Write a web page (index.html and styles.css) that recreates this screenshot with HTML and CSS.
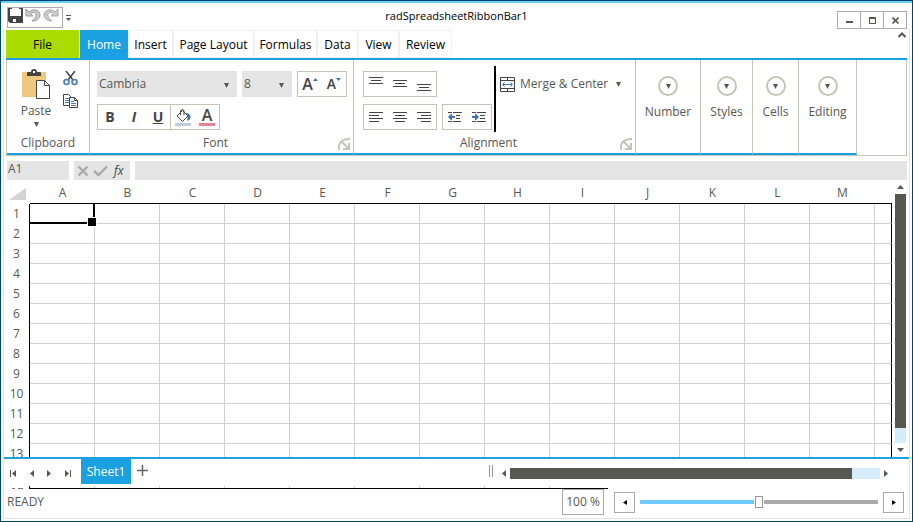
FILE: index.html
```html
<!DOCTYPE html>
<html lang="en">
<head>
<meta charset="utf-8">
<title>radSpreadsheetRibbonBar1</title>
<link rel="stylesheet" href="styles.css">
</head>
<body>
<div class="window">
  <header class="titlebar">
    <div class="quick">
      <div class="quick-box">
        <button aria-label="Save"><svg width="15" height="15" viewBox="0 0 15 15"><path d="M0 0h15v15H2l-2-2z" fill="#444"/><path d="M2 1h11v7H2z" fill="#fff"/><path d="M4 0h7v1H4zM5 11h5v3H5z" fill="#fff"/><path d="M8 11h2v3H8z" fill="#444"/></svg></button>
        <button aria-label="Undo"><svg width="16" height="15" viewBox="0 0 16 15"><path d="M1 1v7h7L5.500 5.500C9 3 12 5 11 8c-.5 2-2 3-4 5 4 0 8-2 8-6 0-5-7-7-11-3z" fill="#ccc" stroke="#999"/></svg></button>
        <button aria-label="Redo"><svg width="16" height="15" viewBox="0 0 16 15"><path d="M15 1v7H8l2.500-2.500C7 3 4 5 5 8c.5 2 2 3 4 5-4 0-8-2-8-6 0-5 7-7 11-3z" fill="#ccc" stroke="#aaa"/></svg></button>
      </div>
      <button class="quick-more" aria-label="Customize toolbar"><svg width="5" height="7" viewBox="0 0 5 7"><path d="M0 0h5v1H0zM0 3h5L2.500 6z" fill="#555"/></svg></button>
    </div>
    <h1>radSpreadsheetRibbonBar1</h1>
    <div class="window-buttons">
      <button aria-label="Minimize"><svg width="7" height="8" viewBox="0 0 7 8"><path d="M0 5h7v2H0z" fill="#585852"/></svg></button>
      <button aria-label="Maximize"><svg width="7" height="7" viewBox="0 0 7 7"><path d="M0 0h7v7H0zM1 2v4h5V2z" fill="#585852" fill-rule="evenodd"/></svg></button>
      <button aria-label="Close"><svg width="7" height="7" viewBox="0 0 7 7"><path d="M.5.500l6 6M6.500.500l-6 6" stroke="#585852" stroke-width="1.600"/></svg></button>
    </div>
  </header>

  <div class="frame">
    <nav class="tabs">
      <button class="tab file">File</button>
      <button class="tab home">Home</button>
      <button class="tab insert">Insert</button>
      <button class="tab page">Page Layout</button>
      <button class="tab formulas">Formulas</button>
      <button class="tab data">Data</button>
      <button class="tab view">View</button>
      <button class="tab review">Review</button>
      <button class="collapse" aria-label="Collapse ribbon"><svg width="8" height="6" viewBox="0 0 8 6"><path d="M.5 5L4 1.500 7.500 5" fill="none" stroke="#585852" stroke-width="2"/></svg></button>
    </nav>

    <div class="ribbon">
      <section class="group clipboard">
        <div class="content">
          <button class="paste">
            <svg width="29" height="31" viewBox="0 0 29 31"><path d="M0 3h24v25H0z" fill="#edc87e"/><path d="M5 7V4q0-1 1-1h3q0-3 3-3t3 3h3q1 0 1 1v3z" fill="#444"/><path d="M11 2h2v2h-2z" fill="#fff"/><path d="M14.500 11.500h8l5 5v13h-13z" fill="#fff" stroke="#444"/><path d="M22.500 11.500v5h5" fill="none" stroke="#444"/></svg>
            <span>Paste</span>
            <svg class="caret" width="5" height="5" viewBox="0 0 5 5"><path d="M0 0h5L2.500 5z"/></svg>
          </button>
          <div class="clip-tools">
            <button aria-label="Cut"><svg width="15" height="15" viewBox="0 0 15 15"><path d="M3 0l7 9M12 0L5 9" stroke="#444" stroke-width="1.500"/><circle cx="3.500" cy="11" r="2.500" fill="none" stroke="#4a7ab0" stroke-width="1.600"/><circle cx="11.500" cy="11" r="2.500" fill="none" stroke="#4a7ab0" stroke-width="1.600"/></svg></button>
            <button aria-label="Copy"><svg width="15" height="15" viewBox="0 0 15 15"><path d="M.5.500h5l3 3v8h-8z" fill="#fff" stroke="#444"/><path d="M2 4.500h4M2 6.500h4M2 8.500h4" stroke="#4a7ab0"/><path d="M6.500 3.500h5l3 3v7h-8z" fill="#fff" stroke="#444"/><path d="M11.500 3.500v3h3" fill="none" stroke="#444"/><path d="M8 7.500h3M8 9.500h5M8 11.500h5" stroke="#4a7ab0"/></svg></button>
          </div>
        </div>
        <h2>Clipboard</h2>
      </section>

      <section class="group font">
        <div class="content rows">
          <div class="row">
            <label class="combo family"><select aria-label="Font family"><option>Cambria</option></select><svg class="caret" width="5" height="5" viewBox="0 0 5 5"><path d="M0 0h5L2.500 5z"/></svg></label>
            <label class="combo size"><select aria-label="Font size"><option>8</option></select><svg class="caret" width="5" height="5" viewBox="0 0 5 5"><path d="M0 0h5L2.500 5z"/></svg></label>
            <div class="set">
              <button class="grow" aria-label="Increase font size">A<svg width="5" height="3" viewBox="0 0 5 3"><path d="M0 3h5L2.500 0z" fill="#3f75b5"/></svg></button>
              <button class="grow small" aria-label="Decrease font size">A<svg width="5" height="3" viewBox="0 0 5 3"><path d="M0 0h5L2.500 3z" fill="#3f75b5"/></svg></button>
            </div>
          </div>
          <div class="row tight">
            <div class="set"><button class="style">B</button><button class="style italic">I</button><button class="style under">U</button></div>
            <div class="set">
              <button aria-label="Fill color"><svg width="16" height="17" viewBox="0 0 16 17"><path d="M7.500 1.500l5.500 5.500-5.500 5.500L2 7z" fill="#fff" stroke="#444"/><path d="M5.500 6V1.500q2-2 3.500 0V6" fill="none" stroke="#444"/><path d="M10 4q6 0 5.500 4.500Q14 13 12 11l1-4z" fill="#3f75b5"/><path d="M0 14h16v3H0z" fill="#bfcde4"/></svg></button>
              <button class="text-color" aria-label="Font color">A</button>
            </div>
          </div>
        </div>
        <h2>Font</h2>
        <button class="launcher" aria-label="Font settings"><svg width="13" height="13" viewBox="0 0 13 13"><path d="M1 12Q-.5 1 12 1M4 4l6 6M11 5v6H5" fill="none" stroke="#c5c5b5" stroke-width="2"/></svg></button>
      </section>

      <section class="group alignment">
        <div class="content">
          <div class="rows">
            <div class="row"><div class="set">
              <button aria-label="Top align"><svg width="14" height="14" viewBox="0 0 14 14"><path d="M0 .5h14M2 3.500h10M0 6.500h14"/></svg></button>
              <button aria-label="Middle align"><svg width="14" height="14" viewBox="0 0 14 14"><path d="M0 3.500h14M2 6.500h10M0 9.500h14"/></svg></button>
              <button aria-label="Bottom align"><svg width="14" height="14" viewBox="0 0 14 14"><path d="M0 7.500h14M2 10.500h10M0 13.500h14"/></svg></button>
            </div></div>
            <div class="row">
              <div class="set">
                <button aria-label="Align left"><svg width="14" height="10" viewBox="0 0 14 10"><path d="M0 .5h14M0 3.500h10M0 6.500h14M0 9.500h10"/></svg></button>
                <button aria-label="Center"><svg width="14" height="10" viewBox="0 0 14 10"><path d="M0 .5h14M2 3.500h10M0 6.500h14M2 9.500h10"/></svg></button>
                <button aria-label="Align right"><svg width="14" height="10" viewBox="0 0 14 10"><path d="M0 .5h14M4 3.500h10M0 6.500h14M4 9.500h10"/></svg></button>
              </div>
              <div class="set">
                <button aria-label="Decrease indent"><svg width="14" height="10" viewBox="0 0 14 10"><path d="M0 .5h4M5 .5h9M8 3.500h4M8 6.500h4M0 9.500h4M5 9.500h8"/><path d="M0 5l3-3h1v2h3v2H4v2H3z" class="blue"/></svg></button>
                <button aria-label="Increase indent"><svg width="14" height="10" viewBox="0 0 14 10"><path d="M0 .5h4M5 .5h9M8 3.500h5M8 6.500h5M0 9.500h4M5 9.500h9"/><path d="M7 5L4 2H3v2H0v2h3v2h1z" class="blue"/></svg></button>
              </div>
            </div>
          </div>
          <div class="divider"></div>
          <button class="merge">
            <svg width="15" height="15" viewBox="0 0 15 15"><path d="M.5.500h14v14H.5zM.5 3.500h14M.5 11.500h14M7.500 0v3M7.500 12v3" fill="none" stroke="#444"/><path d="M3 7.500h9M4.500 5.500l-2 2 2 2M10.500 5.500l2 2-2 2" fill="none" stroke="#3f75b5"/></svg>
            <span>Merge &amp; Center</span>
            <svg class="caret" width="5" height="5" viewBox="0 0 5 5"><path d="M0 0h5L2.500 5z"/></svg>
          </button>
        </div>
        <h2>Alignment</h2>
        <button class="launcher" aria-label="Alignment settings"><svg width="13" height="13" viewBox="0 0 13 13"><path d="M1 12Q-.5 1 12 1M4 4l6 6M11 5v6H5" fill="none" stroke="#c5c5b5" stroke-width="2"/></svg></button>
      </section>

      <button class="group folded number"><span class="disc"><svg class="caret" width="5" height="5" viewBox="0 0 5 5"><path d="M0 0h5L2.500 5z"/></svg></span>Number</button>
      <button class="group folded styles"><span class="disc"><svg class="caret" width="5" height="5" viewBox="0 0 5 5"><path d="M0 0h5L2.500 5z"/></svg></span>Styles</button>
      <button class="group folded cells"><span class="disc"><svg class="caret" width="5" height="5" viewBox="0 0 5 5"><path d="M0 0h5L2.500 5z"/></svg></span>Cells</button>
      <button class="group folded editing"><span class="disc"><svg class="caret" width="5" height="5" viewBox="0 0 5 5"><path d="M0 0h5L2.500 5z"/></svg></span>Editing</button>
    </div>

    <div class="formula-bar">
      <input class="name-box" aria-label="Name box" value="A1">
      <div class="formula-tools">
        <button aria-label="Cancel"><svg width="12" height="12" viewBox="0 0 12 12"><path d="M1.500 1.500l9 9M10.500 1.500l-9 9" stroke="#aaa" stroke-width="2.400"/></svg></button>
        <button aria-label="Enter"><svg width="15" height="12" viewBox="0 0 15 12"><path d="M1 6l4.500 4L14 1.500" fill="none" stroke="#aaa" stroke-width="2.400"/></svg></button>
        <button class="fx">fx</button>
      </div>
      <input class="formula" aria-label="Formula">
    </div>

    <main class="sheet-area">
      <div class="sheet">
        <table>
          <colgroup><col class="row-col"><col span="13" class="data-col"><col></colgroup>
          <thead><tr><th class="corner"><svg width="17" height="12" viewBox="0 0 17 12"><path d="M17 0v12H0z" fill="#d3d3d3"/></svg></th><th>A</th><th>B</th><th>C</th><th>D</th><th>E</th><th>F</th><th>G</th><th>H</th><th>I</th><th>J</th><th>K</th><th>L</th><th>M</th><th></th></tr></thead>
          <tbody>
            <tr><th>1</th><td class="selected"></td><td></td><td></td><td></td><td></td><td></td><td></td><td></td><td></td><td></td><td></td><td></td><td></td><td></td></tr>
            <tr><th>2</th><td></td><td></td><td></td><td></td><td></td><td></td><td></td><td></td><td></td><td></td><td></td><td></td><td></td><td></td></tr>
            <tr><th>3</th><td></td><td></td><td></td><td></td><td></td><td></td><td></td><td></td><td></td><td></td><td></td><td></td><td></td><td></td></tr>
            <tr><th>4</th><td></td><td></td><td></td><td></td><td></td><td></td><td></td><td></td><td></td><td></td><td></td><td></td><td></td><td></td></tr>
            <tr><th>5</th><td></td><td></td><td></td><td></td><td></td><td></td><td></td><td></td><td></td><td></td><td></td><td></td><td></td><td></td></tr>
            <tr><th>6</th><td></td><td></td><td></td><td></td><td></td><td></td><td></td><td></td><td></td><td></td><td></td><td></td><td></td><td></td></tr>
            <tr><th>7</th><td></td><td></td><td></td><td></td><td></td><td></td><td></td><td></td><td></td><td></td><td></td><td></td><td></td><td></td></tr>
            <tr><th>8</th><td></td><td></td><td></td><td></td><td></td><td></td><td></td><td></td><td></td><td></td><td></td><td></td><td></td><td></td></tr>
            <tr><th>9</th><td></td><td></td><td></td><td></td><td></td><td></td><td></td><td></td><td></td><td></td><td></td><td></td><td></td><td></td></tr>
            <tr><th>10</th><td></td><td></td><td></td><td></td><td></td><td></td><td></td><td></td><td></td><td></td><td></td><td></td><td></td><td></td></tr>
            <tr><th>11</th><td></td><td></td><td></td><td></td><td></td><td></td><td></td><td></td><td></td><td></td><td></td><td></td><td></td><td></td></tr>
            <tr><th>12</th><td></td><td></td><td></td><td></td><td></td><td></td><td></td><td></td><td></td><td></td><td></td><td></td><td></td><td></td></tr>
            <tr><th>13</th><td></td><td></td><td></td><td></td><td></td><td></td><td></td><td></td><td></td><td></td><td></td><td></td><td></td><td></td></tr>
          </tbody>
        </table>
      </div>
      <div class="v-scroll">
        <button aria-label="Scroll up"><svg width="7" height="4" viewBox="0 0 7 4"><path d="M0 4h7L3.500 0z"/></svg></button>
        <div class="track"><div class="thumb"></div></div>
        <button aria-label="Scroll down"><svg width="7" height="4" viewBox="0 0 7 4"><path d="M0 0h7L3.500 4z"/></svg></button>
      </div>
    </main>

    <div class="sheet-tabs">
      <div class="sheet-nav">
        <button aria-label="First sheet"><svg width="7" height="7" viewBox="0 0 7 7"><path d="M0 0h1v7H0zM6 0v7L2 3.500z"/></svg></button>
        <button aria-label="Previous sheet"><svg width="4" height="7" viewBox="0 0 4 7"><path d="M4 0v7L0 3.500z"/></svg></button>
        <button aria-label="Next sheet"><svg width="4" height="7" viewBox="0 0 4 7"><path d="M0 0v7l4-3.500z"/></svg></button>
        <button aria-label="Last sheet"><svg width="7" height="7" viewBox="0 0 7 7"><path d="M6 0h1v7H6zM1 0v7l4-3.500z"/></svg></button>
      </div>
      <button class="sheet-tab">Sheet1</button>
      <button class="add-sheet" aria-label="Add sheet"><svg width="11" height="11" viewBox="0 0 11 11"><path d="M5 0h1v5h5v1H6v5H5V6H0V5h5z" fill="#666" stroke="#666" stroke-width=".5"/></svg></button>
      <div class="h-scroll">
        <span class="splitter"></span>
        <button aria-label="Scroll left"><svg width="4" height="7" viewBox="0 0 4 7"><path d="M4 0v7L0 3.500z"/></svg></button>
        <div class="track"><div class="thumb"></div></div>
        <button aria-label="Scroll right"><svg width="4" height="7" viewBox="0 0 4 7"><path d="M0 0v7l4-3.500z"/></svg></button>
      </div>
    </div>
    <div class="sheet-edge"><svg class="edge-header" width="25" height="3" viewBox="0 0 25 3"><path d="M8 2h3v1H8zM14 2h5v1h-5z" fill="#777"/></svg><span class="edge-cells"></span></div>

    <footer class="status">
      <span>READY</span>
      <div class="zoom">
        <button class="percent">100 %</button>
        <button class="step" aria-label="Zoom out"><svg width="4" height="5" viewBox="0 0 4 5"><path d="M4 0v5L0 2.500z"/></svg></button>
        <input type="range" aria-label="Zoom" min="0" max="200" value="100">
        <button class="step" aria-label="Zoom in"><svg width="4" height="5" viewBox="0 0 4 5"><path d="M0 0v5l4-2.500z"/></svg></button>
      </div>
    </footer>
  </div>
</div>
</body>
</html>
```
FILE: styles.css
```css
* { box-sizing: border-box; }

body {
  margin: 0;
  background: #fff;
  color: #585852;
  font: 12px/16px "Open Sans", "Noto Sans", sans-serif;
}

button, input, select {
  margin: 0;
  padding: 0;
  border: 0;
  border-radius: 0;
  background: none;
  color: inherit;
  font: inherit;
}

button { display: flex; align-items: center; justify-content: center; white-space: nowrap; }
svg { display: block; flex: none; }
h1, h2 { margin: 0; font: inherit; text-align: center; }
.caret { fill: #585852; }

.window {
  display: flex;
  flex-direction: column;
  height: 100vh;
  border: 1px solid #00466b;
}

/* Title bar */
.titlebar {
  display: grid;
  grid-template-columns: 1fr auto 1fr;
  height: 28px;
  border-top: 2px solid #6dcbfb;
}

.titlebar h1 { padding-top: 5px; color: #000; font-size: 11px; }
.quick { display: flex; gap: 3px; padding: 4px 0 0 6px; }
.quick-box { display: flex; gap: 2px; width: 56px; height: 21px; border: 1px solid #aaa; }
.quick-box button { align-items: flex-start; }
.window-buttons { display: flex; justify-content: flex-end; padding: 8px 5px 0 0; }
.window-buttons button { width: 24px; height: 18px; margin-left: -1px; border: 1px solid #aaa; }

.frame {
  display: flex;
  flex: 1;
  flex-direction: column;
  min-height: 0;
  margin: 0 2px 2px;
  border: 1px solid #e3dfe3;
  border-top: 0;
}

/* Ribbon tabs */
.tabs { display: flex; height: 31px; margin: 0 2px; padding-top: 1px; border-bottom: 2px solid #1ba1e2; }
.tab { height: 28px; padding-top: 2px; border: 1px solid #f0f0f0; color: #000; }
.file { width: 73px; margin-right: 1px; border: 0; background: #aadc00; }
.home { width: 48px; border: 0; background: #1ba1e2; color: #fff; }
.insert { width: 45px; }
.page { width: 81px; }
.formulas { width: 63px; }
.data, .view { width: 41px; }
.review { width: 53px; }
.collapse { align-self: flex-start; margin: 2px 1px 0 auto; }

/* Ribbon */
.ribbon {
  display: flex;
  flex: none;
  height: 96px;
  margin: 0 2px;
  border: 1px solid #c5c5b5;
  border-top: 0;
}

.group { position: relative; display: flex; flex-direction: column; border-right: 1px solid #c5c5b5; border-bottom: 2px solid #1ba1e2; }
.group h2 { height: 18px; }
.content { display: flex; flex: 1; }
.clipboard { width: 83px; }
.font { width: 264px; }
.alignment { width: 282px; }
.font h2, .alignment h2 { padding-right: 12px; }

.paste { flex-direction: column; justify-content: flex-start; gap: 3px; width: 30px; margin: 9px 0 0 14px; }
.clip-tools { display: flex; flex-direction: column; gap: 8px; margin: 11px 0 0 12px; }

.rows { display: flex; flex-direction: column; gap: 7px; padding-top: 11px; }
.font .content { padding-left: 7px; }
.alignment .rows { padding-left: 9px; }
.row { display: flex; gap: 5px; }
.row.tight { gap: 0; }
.row.tight .set + .set { margin-left: -1px; }
.set { display: flex; height: 26px; border: 1px solid #c5c5b5; }
.set button { width: 24px; }
.combo { position: relative; height: 26px; background: #e5e5e5; }
.combo select { width: 100%; height: 100%; padding-left: 2px; appearance: none; }
.combo .caret { position: absolute; top: 12px; right: 8px; pointer-events: none; }
.family { width: 140px; }
.size { width: 50px; }

.style, .grow, .text-color { color: #444; font: bold 14px/16px "Open Sans", sans-serif; }
.italic { font-style: italic; }
.under { text-decoration: underline; }
.grow { font-size: 16px; font-weight: 600; }
.grow svg { align-self: flex-start; margin-top: 6px; }
.grow.small { font-size: 14px; }
.set .text-color { width: 16px; height: 19px; margin: 2px 4px 0; border-bottom: 3px solid #e88296; font-size: 16px; font-weight: 600; }
.alignment .set path { fill: none; stroke: #444; }
.alignment .set .blue { fill: #3f75b5; stroke: none; }
.divider { width: 2px; height: 66px; margin: 6px 0 0 2px; background: #000; }
.merge { align-self: flex-start; gap: 5px; height: 26px; margin: 11px 0 0 4px; }
.merge .caret { margin-left: 3px; }
.launcher { position: absolute; right: 2px; bottom: 2px; }

.folded { align-items: center; justify-content: flex-start; gap: 8px; padding-top: 16px; }
.disc { display: flex; align-items: center; justify-content: center; width: 20px; height: 20px; border: 2px solid #c5c5b5; border-radius: 50%; }
.number { width: 65px; }
.styles { width: 52px; }
.cells { width: 46px; }
.editing { width: 58px; }

/* Formula bar */
.formula-bar { display: flex; flex: none; gap: 5px; height: 19px; margin: 5px 2px 0 3px; }
.formula-bar > * { background: #e5e5e5; }
.name-box { width: 62px; padding: 0 1px 3px; }
.formula-tools { display: flex; align-items: center; gap: 4px; width: 56px; padding-left: 3px; }
.fx { margin-left: 2px; color: #444; font-style: italic; }
.formula { flex: 1; min-width: 0; }

/* Sheet */
.sheet-area { display: flex; flex: 1; min-height: 0; border-bottom: 2px solid #1ba1e2; }
.sheet { flex: 1; min-width: 0; overflow: hidden; }
table { width: 100%; table-layout: fixed; border-collapse: separate; border-spacing: 0; }
.row-col { width: 26px; }
.data-col { width: 65px; }
th { padding: 0; font-weight: normal; text-align: center; }
thead th { height: 24px; padding-top: 2px; border-bottom: 1px solid #000; }
thead .corner { padding: 4px 0 0 5px; border: 0; }
tbody th { height: 20px; border-right: 1px solid #000; }
td { position: relative; height: 20px; padding: 0; border-right: 1px solid #d0d0d0; border-bottom: 1px solid #d0d0d0; }
td:last-child { border-right-color: #000; }
.selected { border-right: 2px solid #000; border-bottom: 2px solid #000; }
.selected::after {
  content: "";
  position: absolute;
  right: -4px;
  bottom: -5px;
  z-index: 1;
  width: 8px;
  height: 8px;
  border: 1px solid #fff;
  background: #000;
}

.track { background: #d5edfa; }
.thumb { background: #585852; }
.v-scroll { display: flex; flex-direction: column; width: 17px; padding: 0 3px; fill: #585852; }
.v-scroll button { flex: none; height: 14px; }
.v-scroll .track { flex: 1; }
.v-scroll .thumb { height: 94%; }

/* Sheet tabs */
.sheet-tabs { display: flex; flex: none; height: 27px; fill: #585852; }
.sheet-nav { display: flex; align-items: center; gap: 13px; width: 77px; padding: 1px 0 0 6px; }
.sheet-tab { width: 50px; height: 25px; background: #1ba1e2; color: #fff; }
.add-sheet { width: 22px; height: 22px; }
.h-scroll { display: flex; align-items: center; width: 46.4%; margin-left: auto; padding: 2px 21px 0 0; }
.splitter { flex: none; width: 4px; height: 12px; margin: 0 9px 6px 0; border: 1px solid #999; border-width: 0 1px; }
.h-scroll .track { flex: 1; height: 11px; margin: 0 4px; }
.h-scroll .thumb { width: 92.400%; height: 100%; }

.sheet-edge { display: flex; flex: none; height: 3px; }
.edge-cells { width: 64%; border-left: 1px solid #000; border-bottom: 1px solid #000; background: repeating-linear-gradient(to right, transparent 0 64px, #d0d0d0 64px 65px); }

/* Status bar */
.status { display: flex; flex: none; justify-content: space-between; height: 29px; padding: 0 5px 0 3px; }
.status > span { padding-top: 5px; }
.zoom { display: flex; align-items: flex-start; width: 342px; }
.percent { width: 42px; height: 26px; margin-right: 10px; border: 1px solid #aaa; }
.step { width: 21px; height: 21px; margin-top: 3px; border: 1px solid #aaa; }
.zoom input { flex: 1; min-width: 0; height: 20px; margin: 3px 5px 0; appearance: none; }
.zoom input::-webkit-slider-runnable-track { height: 4px; background: linear-gradient(to right, #6dcbfb 50%, #a9aba8 50%); }
.zoom input::-webkit-slider-thumb { width: 8px; height: 12px; margin-top: -4px; border: 1px solid #999; outline: 1px solid #fff; background: #fff; appearance: none; }
```
